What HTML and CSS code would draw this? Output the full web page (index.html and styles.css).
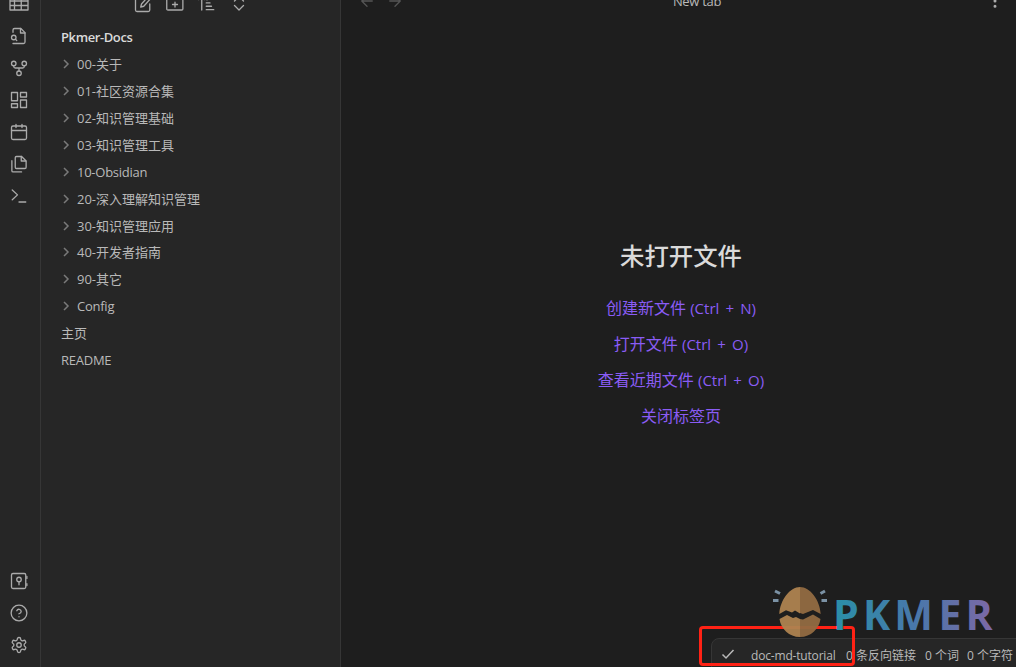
FILE: index.html
```html
<!DOCTYPE html>
<html lang="zh-CN">
<head>
<meta charset="utf-8">
<title>Pkmer-Docs</title>
<link rel="stylesheet" href="styles.css">
</head>
<body>
<div class="app">
  <nav class="rail">
    <div class="rail-group">
      <svg class="icon" viewBox="0 0 24 24"><path d="M0 2h24v18H0zM0 8h24M0 14h24M6 2v18M15 2v18"/></svg>
      <svg class="icon" viewBox="0 0 24 24"><path d="M4 22h14a2 2 0 0 0 2-2V7.500L14.500 2H6a2 2 0 0 0-2 2v3"/><path d="M14 2v6h6"/><circle cx="5" cy="14" r="3"/><path d="m9 18-1.500-1.500"/></svg>
      <svg class="icon" viewBox="0 0 24 24"><circle cx="12" cy="19" r="3"/><circle cx="5" cy="6" r="3"/><circle cx="19" cy="6" r="3"/><path d="M19 9v1c0 1-.7 2-2 2H7c-1.300 0-2-1-2-2V9M12 12v4"/></svg>
      <svg class="icon" viewBox="0 0 24 24"><path d="M2 2h8v11H2zM14 2h8v6h-8zM14 12h8v10h-8zM2 17h8v5H2z"/></svg>
      <svg class="icon" viewBox="0 0 24 24"><rect x="2" y="4" width="20" height="18" rx="2"/><path d="M16 2v4M8 2v4M2 10h20"/></svg>
      <svg class="icon" viewBox="0 0 24 24"><path d="M15.500 2H8.600C7.700 2 7 2.700 7 3.600v12.800c0 .9.7 1.600 1.600 1.600h11.300c.9 0 1.600-.7 1.600-1.600V8z"/><path d="M2.500 7.600v13.300c0 .9.7 1.600 1.600 1.600h11.300M15 2v6h6"/></svg>
      <svg class="icon" viewBox="0 0 24 24"><path d="m3 17 7-6.500L3 4M12 20h9"/></svg>
    </div>
    <div class="rail-group">
      <svg class="icon" viewBox="0 0 24 24"><rect x="2" y="2" width="19" height="20" rx="2"/><circle cx="12" cy="10" r="3"/><path d="M12 13v4M22.500 6v2.500M22.500 15.500V18"/></svg>
      <svg class="icon" viewBox="0 0 24 24"><circle cx="12" cy="12" r="10.500"/><path d="M9.090 9a3 3 0 0 1 5.830 1c0 2-3 3-3 3M12 17h.01"/></svg>
      <svg class="icon" viewBox="0 0 24 24"><path d="M12.220 2h-.44a2 2 0 0 0-2 2v.18a2 2 0 0 1-1 1.730l-.43.25a2 2 0 0 1-2 0l-.15-.08a2 2 0 0 0-2.730.73l-.22.38a2 2 0 0 0 .73 2.730l.15.1a2 2 0 0 1 1 1.720v.51a2 2 0 0 1-1 1.740l-.15.09a2 2 0 0 0-.73 2.730l.22.38a2 2 0 0 0 2.730.73l.15-.08a2 2 0 0 1 2 0l.43.25a2 2 0 0 1 1 1.730V20a2 2 0 0 0 2 2h.44a2 2 0 0 0 2-2v-.18a2 2 0 0 1 1-1.730l.43-.25a2 2 0 0 1 2 0l.15.08a2 2 0 0 0 2.730-.73l.22-.39a2 2 0 0 0-.73-2.730l-.15-.08a2 2 0 0 1-1-1.740v-.5a2 2 0 0 1 1-1.740l.15-.09a2 2 0 0 0 .73-2.730l-.22-.38a2 2 0 0 0-2.730-.73l-.15.08a2 2 0 0 1-2 0l-.43-.25a2 2 0 0 1-1-1.730V4a2 2 0 0 0-2-2z"/><circle cx="12" cy="12" r="3"/></svg>
    </div>
  </nav>

  <aside class="sidebar">
    <div class="toolbar">
      <svg class="icon" viewBox="0 0 24 24"><path d="M11 4H4a2 2 0 0 0-2 2v14a2 2 0 0 0 2 2h15a2 2 0 0 0 2-2v-8"/><path d="M18.500 2.500a2.120 2.120 0 0 1 3 3L13 15l-4 1 1-4z"/></svg>
      <svg class="icon" viewBox="0 0 24 24"><path d="M3 20h18a1.500 1.500 0 0 0 1.500-1.500V7A2 2 0 0 0 21 5h-8l-2-3H3a2 2 0 0 0-2 2v14.500A1.500 1.500 0 0 0 3 20zM12 9.500v6.500M8.700 12.700h6.600"/></svg>
      <svg class="icon" viewBox="0 0 24 24"><path d="m1 6 4-4 4 4M5 2v18M11 6h2M11 10.500h5M11 15h7M11 19.500h10"/></svg>
      <svg class="icon" viewBox="0 0 24 24"><path d="m6 14 6 6 6-6M6 8l6-6 6 6"/></svg>
    </div>
    <div class="vault">Pkmer-Docs</div>
    <div class="tree">
      <div class="row"><svg class="chev" viewBox="0 0 8 10"><path d="m2 1 4 4-4 4"/></svg><span>00-关于</span></div>
      <div class="row"><svg class="chev" viewBox="0 0 8 10"><path d="m2 1 4 4-4 4"/></svg><span>01-社区资源合集</span></div>
      <div class="row"><svg class="chev" viewBox="0 0 8 10"><path d="m2 1 4 4-4 4"/></svg><span>02-知识管理基础</span></div>
      <div class="row"><svg class="chev" viewBox="0 0 8 10"><path d="m2 1 4 4-4 4"/></svg><span>03-知识管理工具</span></div>
      <div class="row"><svg class="chev" viewBox="0 0 8 10"><path d="m2 1 4 4-4 4"/></svg><span class="latin">10-Obsidian</span></div>
      <div class="row"><svg class="chev" viewBox="0 0 8 10"><path d="m2 1 4 4-4 4"/></svg><span>20-深入理解知识管理</span></div>
      <div class="row"><svg class="chev" viewBox="0 0 8 10"><path d="m2 1 4 4-4 4"/></svg><span>30-知识管理应用</span></div>
      <div class="row"><svg class="chev" viewBox="0 0 8 10"><path d="m2 1 4 4-4 4"/></svg><span>40-开发者指南</span></div>
      <div class="row"><svg class="chev" viewBox="0 0 8 10"><path d="m2 1 4 4-4 4"/></svg><span>90-其它</span></div>
      <div class="row"><svg class="chev" viewBox="0 0 8 10"><path d="m2 1 4 4-4 4"/></svg><span class="latin">Config</span></div>
      <div class="row file"><span>主页</span></div>
      <div class="row file"><span class="latin">README</span></div>
    </div>
  </aside>

  <main class="main">
    <header class="view-header">
      <div class="history">
        <svg class="icon" viewBox="0 0 24 24"><path d="M19 12H5M12 19l-7-7 7-7"/></svg>
        <svg class="icon" viewBox="0 0 24 24"><path d="M5 12h14M12 5l7 7-7 7"/></svg>
      </div>
      <div class="view-title">New tab</div>
      <svg class="icon more" viewBox="0 0 24 24"><circle cx="12" cy="5" r="1"/><circle cx="12" cy="12" r="1"/><circle cx="12" cy="19" r="1"/></svg>
    </header>
    <section class="empty">
      <h1>未打开文件</h1>
      <a>创建新文件 <span>(Ctrl + N)</span></a>
      <a>打开文件 <span>(Ctrl + O)</span></a>
      <a>查看近期文件 <span>(Ctrl + O)</span></a>
      <a>关闭标签页</a>
    </section>
  </main>

  <footer class="status">
    <svg class="check" viewBox="0 0 14 12"><path d="m1.500 6.500 3.500 3.500 7.500-8"/></svg>
    <span class="repo">doc-md-tutorial</span>
    <span class="links">0 条反向链接</span>
    <span class="words">0 个词</span>
    <span>0 个字符</span>
  </footer>
  <div class="highlight"></div>
  <svg class="watermark" viewBox="0 0 236 56">
    <defs>
      <linearGradient id="brand" gradientUnits="userSpaceOnUse" x1="66" x2="222" y1="0" y2="0">
        <stop offset="0" stop-color="#2b8fa8"/><stop offset=".5" stop-color="#4878aa"/><stop offset="1" stop-color="#7c68a6"/>
      </linearGradient>
    </defs>
    <g opacity=".95">
      <path fill="#ae8350" d="M30 4C20 4 10 17 9.300 31l6.700-3.800 6 2.300 3-2 5 3z"/>
      <path fill="#926b42" d="M30 4c10 0 20 13 20.700 27L43 27 33 31l-3-1z"/>
      <path fill="#ae8350" d="m9.500 36 7.500-4 6 3 3-1 4 2v18c-11 0-19-8-20.500-18z"/>
      <path fill="#926b42" d="m30 36 3 .5 10-5 7.500 4.500C49 46 41 54 30 54z"/>
    </g>
    <path class="spark" d="m5 8 5 2.500M3 17.500h5.500M55 8l-4.500 2.500M51.500 17.500H57"/>
    <text class="brand" fill="url(#brand)" x="63 93 124.300 168.500 195.500" y="47">PKMER</text>
  </svg>
</div>
</body>
</html>
```
FILE: styles.css
```css
* { box-sizing: border-box; }
body {
  margin: 0;
  background: #1e1e1e;
  color: #b9b9b9;
  font: 13px/20px "Open Sans", "Noto Sans CJK SC", sans-serif;
}
.app {
  position: relative;
  display: flex;
  width: 1016px;
  height: 667px;
  overflow: hidden;
}
.icon {
  flex: none;
  width: 18px;
  height: 18px;
  overflow: visible;
  fill: none;
  stroke: #ababab;
  stroke-width: 1.75;
  stroke-linecap: round;
  stroke-linejoin: round;
}
.rail {
  display: flex;
  flex-direction: column;
  justify-content: space-between;
  align-items: center;
  width: 41px;
  padding: 0 3px 13px 0;
  background: #262626;
  border-right: 1px solid #363636;
}
.rail-group {
  display: flex;
  flex-direction: column;
  gap: 14px;
}
.rail-group:first-child { margin-top: -5px; }
.sidebar {
  width: 300px;
  background: #262626;
  border-right: 1px solid #363636;
}
.toolbar {
  display: flex;
  gap: 14px;
  height: 18px;
  margin: -5px 0 0 93px;
}
.vault {
  margin: 11px 0 0 20px;
  height: 27px;
  line-height: 27px;
  font-weight: 600;
  letter-spacing: -.4px;
  color: #dadada;
}
.row {
  display: flex;
  align-items: center;
  gap: 7px;
  height: 26.86px;
  padding-left: 21px;
}
.row.file { padding-left: 20px; }
.row span { white-space: nowrap; }
.row .latin { letter-spacing: -.25px; }
.chev {
  width: 8px;
  height: 10px;
  fill: none;
  stroke: #7a7a7a;
  stroke-width: 1.5;
}
.main {
  flex: 1;
  display: flex;
  flex-direction: column;
}
.view-header {
  display: grid;
  grid-template-columns: 1fr auto 1fr;
  align-items: center;
  height: 20px;
  margin-top: -9px;
  padding: 0 12px 0 17px;
}
.history { display: flex; gap: 10px; }
.history .icon { stroke: #555; }
.view-title { padding-left: 32px; letter-spacing: -.3px; }
.more { justify-self: end; stroke-width: 2; }
.empty {
  display: flex;
  flex-direction: column;
  align-items: center;
  padding-top: 224px;
  padding-left: 5px;
}
.empty h1 {
  margin: 0 0 13px;
  font-size: 24.4px;
  line-height: 42px;
  font-weight: 500;
  color: #dadada;
}
.empty a {
  height: 36px;
  font-size: 16px;
  line-height: 36px;
  color: #8a5cf5;
}
.empty span { font-size: 15px; word-spacing: 2.3px; }
.status {
  position: absolute;
  left: 711px;
  top: 638px;
  display: flex;
  align-items: center;
  width: 306px;
  height: 30px;
  padding: 6px 0 0 9px;
  background: #262626;
  border: 1px solid #363636;
  border-radius: 8px 0 0 0;
  font-size: 12px;
  white-space: nowrap;
}
.check {
  width: 14px;
  height: 12px;
  margin: -5px 16px 0 0;
  fill: none;
  stroke: #b9b9b9;
  stroke-width: 1.5;
}
.repo { width: 95px; letter-spacing: -.18px; }
.links { width: 79px; }
.words { width: 42px; }
.highlight {
  position: absolute;
  left: 699px;
  top: 626px;
  width: 156px;
  height: 40px;
  border: 3px solid #ff2215;
  border-radius: 4px;
}
.watermark {
  position: absolute;
  left: 770px;
  top: 583px;
  width: 236px;
  height: 56px;
  overflow: visible;
}
.spark { fill: none; stroke: #7b92a5; stroke-width: 3; }
.brand { font: 700 41px "Open Sans", sans-serif; }
```
